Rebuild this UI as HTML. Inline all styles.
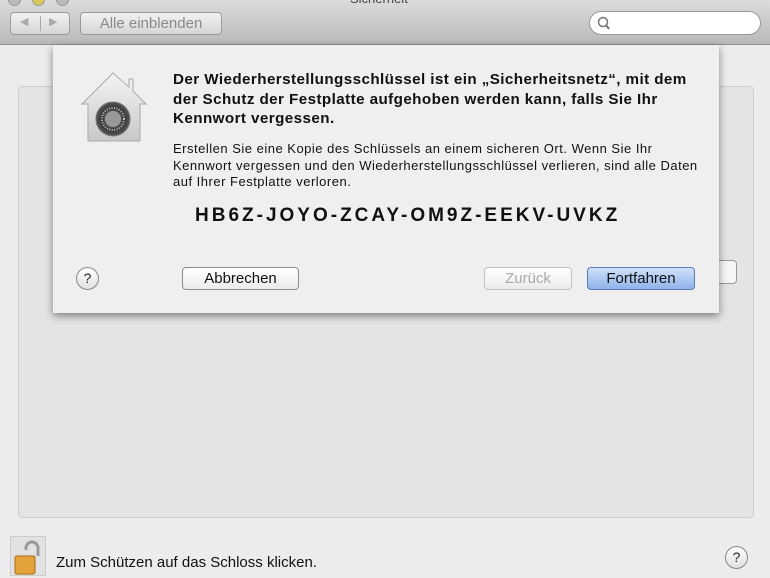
<!DOCTYPE html>
<html><head><meta charset="utf-8"><style>
*{margin:0;padding:0;box-sizing:border-box}
body{width:770px;height:578px;overflow:hidden;background:#ececec;font-family:"Liberation Sans",sans-serif;position:relative}
.tb{position:absolute;left:0;top:0;width:770px;height:45px;background:linear-gradient(#dcdcdc,#b9b9b9);border-bottom:1px solid #8f8f8f}
.title{position:absolute;left:350px;top:-9px;font-size:13px;color:#444}
.dot{position:absolute;top:-7px;width:13px;height:13px;border-radius:50%;background:#bbb;border:1px solid #999}
.nav{position:absolute;left:10px;top:12px;width:60px;height:23px;border:1px solid #9a9a9a;border-radius:4px;background:linear-gradient(#f2f2f2,#d6d6d6)}
.nav:after{content:"";position:absolute;left:29px;top:3px;width:1px;height:15px;background:#aaa}
.nb{position:absolute;left:80px;top:12px;width:142px;height:23px;border:1px solid #9a9a9a;border-radius:4px;background:linear-gradient(#f2f2f2,#d6d6d6);color:#8a8a8a;font-size:15px;text-align:center;line-height:21px}
.search{position:absolute;left:589px;top:11px;width:172px;height:24px;border:1px solid #999;border-radius:12px;background:#fff}
.panel{position:absolute;left:18px;top:86px;width:736px;height:432px;background:#e4e4e4;border:1px solid #cfcfcf;border-radius:4px}
.ghost{position:absolute;background:#ddd;filter:blur(2px)}
.sheet{position:absolute;left:53px;top:45px;width:666px;height:268px;background:#efefef;box-shadow:0 3px 8px rgba(0,0,0,.45)}
.h{position:absolute;left:120px;top:25px;width:580px;white-space:nowrap;font-weight:bold;font-size:15.2px;letter-spacing:.42px;line-height:19.5px;color:#111}
.p{position:absolute;left:120px;top:96px;width:580px;white-space:nowrap;font-size:13px;letter-spacing:.5px;line-height:16.5px;color:#111}
.key{position:absolute;left:142px;top:160px;font-weight:bold;font-size:19px;letter-spacing:3px;color:#111}
.btn{position:absolute;height:23px;border:1px solid #8d8d8d;border-radius:4px;background:linear-gradient(#fff,#ebebeb);font-size:15px;text-align:center;line-height:21px;color:#111}
.help{position:absolute;width:23px;height:23px;border-radius:50%;border:1px solid #888;background:linear-gradient(#fff,#e0e0e0);font-size:14px;text-align:center;line-height:21px;color:#222}
.foot{position:absolute;left:56px;top:554px;font-size:15px;color:#111}
</style></head><body>
<div class="tb">
<div class="dot" style="left:8px"></div><div class="dot" style="left:32px;background:#d8c85a"></div><div class="dot" style="left:56px"></div>
<div class="title">Sicherheit</div>
<div class="nav"><span style="position:absolute;left:9px;top:2px;font-size:11px;color:#aaa">◀</span><span style="position:absolute;left:38px;top:2px;font-size:11px;color:#aaa">▶</span></div>
<div class="nb">Alle einblenden</div>
<div class="search"><svg width="20" height="20" style="position:absolute;left:5px;top:2px"><circle cx="8" cy="8" r="4.5" fill="none" stroke="#777" stroke-width="1.5"/><line x1="11" y1="11" x2="14" y2="15" stroke="#777" stroke-width="2"/></svg></div>
</div>
<div class="panel">
<div class="ghost" style="left:115px;top:35px;width:540px;height:10px"></div>
<div class="ghost" style="left:115px;top:100px;width:570px;height:50px"></div>
<div class="ghost" style="left:115px;top:180px;width:200px;height:22px"></div>
<div style="position:absolute;left:528px;top:173px;width:190px;height:24px;border:1px solid #999;border-radius:4px;background:#f6f6f6"></div>
</div>
<div class="sheet">
<svg width="80" height="80" style="position:absolute;left:26px;top:26px" viewBox="0 0 80 80">
<defs><linearGradient id="g" x1="0" y1="0" x2="0" y2="1"><stop offset="0" stop-color="#f4f4f4"/><stop offset="1" stop-color="#c8c8c8"/></linearGradient>
<radialGradient id="d"><stop offset="0" stop-color="#aaa"/><stop offset=".45" stop-color="#666"/><stop offset=".6" stop-color="#333"/><stop offset="1" stop-color="#555"/></radialGradient></defs>
<path d="M34 2 L3 33 L9 33 L9 70 L61 70 L61 33 L67 33 L54 20 L54 8 L50 8 L50 16 Z" fill="url(#g)" stroke="#aaa"/>
<circle cx="34" cy="48" r="17" fill="url(#d)" stroke="#777"/>
<circle cx="34" cy="48" r="11" fill="none" stroke="#ccc" stroke-width="2" stroke-dasharray="1 1.5"/>
<circle cx="34" cy="48" r="8" fill="#999"/>
</svg>
<div class="h">Der Wiederherstellungsschlüssel ist ein „Sicherheitsnetz“, mit dem<br>der Schutz der Festplatte aufgehoben werden kann, falls Sie Ihr<br>Kennwort vergessen.</div>
<div class="p">Erstellen Sie eine Kopie des Schlüssels an einem sicheren Ort. Wenn Sie Ihr<br>Kennwort vergessen und den Wiederherstellungsschlüssel verlieren, sind alle Daten<br>auf Ihrer Festplatte verloren.</div>
<div class="key">HB6Z-JOYO-ZCAY-OM9Z-EEKV-UVKZ</div>
<div class="help" style="left:23px;top:222px">?</div>
<div class="btn" style="left:129px;top:222px;width:117px">Abbrechen</div>
<div class="btn" style="left:431px;top:222px;width:88px;color:#aaa;border-color:#c2c2c2">Zurück</div>
<div class="btn" style="left:534px;top:222px;width:108px;background:linear-gradient(#cfe0f8,#8fb3ea);border-color:#5a7cb8">Fortfahren</div>
</div>
<svg width="36" height="40" style="position:absolute;left:10px;top:536px"><rect x="0.5" y="0.5" width="35" height="39" fill="#e2e2e2" stroke="#ccc"/><path d="M28 20 V12 a6 6 0 0 0 -12 0 V14" fill="none" stroke="#999" stroke-width="3"/><rect x="5" y="20" width="20" height="18" rx="2" fill="#e4a33a" stroke="#a86b10"/></svg>
<div class="foot">Zum Schützen auf das Schloss klicken.</div>
<div class="help" style="left:725px;top:546px">?</div>
</body></html>
